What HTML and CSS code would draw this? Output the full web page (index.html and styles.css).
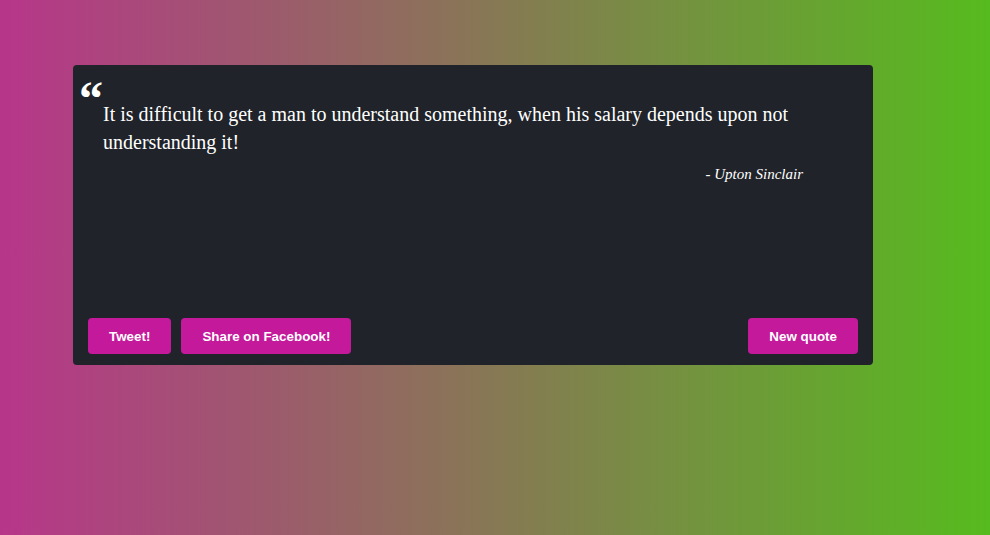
FILE: index.html
```html
<!DOCTYPE html>
<html>
<head>
<meta charset="utf-8">
<link rel="stylesheet" href="styles.css">
</head>
<body>
<div class="card">
  <div class="mark">&ldquo;</div>
  <p class="text">It is difficult to get a man to understand something, when his salary depends upon not understanding it!</p>
  <p class="author">- Upton Sinclair</p>
  <div class="actions">
    <button class="btn">Tweet!</button>
    <button class="btn">Share on Facebook!</button>
    <button class="btn new">New quote</button>
  </div>
</div>
</body>
</html>
```
FILE: styles.css
```css
html, body {
  margin: 0;
  height: 100%;
}
body {
  background: linear-gradient(to right, #b7368a, #56bb1e);
  padding: 65px 0 0 73px;
  box-sizing: border-box;
}
.card {
  width: 800px;
  height: 300px;
  box-sizing: border-box;
  background: #202329;
  border-radius: 4px;
  padding: 15px 15px 11px 6px;
  display: flex;
  flex-direction: column;
  color: #fff;
  font-family: "Liberation Serif", serif;
}
.mark {
  font-size: 48px;
  font-weight: bold;
  line-height: 20px;
  height: 20px;
  padding-top: 9px;
}
.text {
  margin: -9px 15px 0 24px;
  font-size: 20px;
  line-height: 28px;
}
.author {
  margin: 10px 55px 0 0;
  text-align: right;
  font-style: italic;
  font-size: 15px;
}
.actions {
  margin-top: auto;
  padding-left: 9px;
  display: flex;
  gap: 10px;
}
.btn {
  height: 36px;
  padding: 0 21px;
  border: 0;
  border-radius: 4px;
  background: #c4199b;
  color: #fff;
  font-family: "Liberation Sans", Arial, sans-serif;
  font-weight: bold;
  font-size: 13.4px;
}
.new {
  margin-left: auto;
}
```
